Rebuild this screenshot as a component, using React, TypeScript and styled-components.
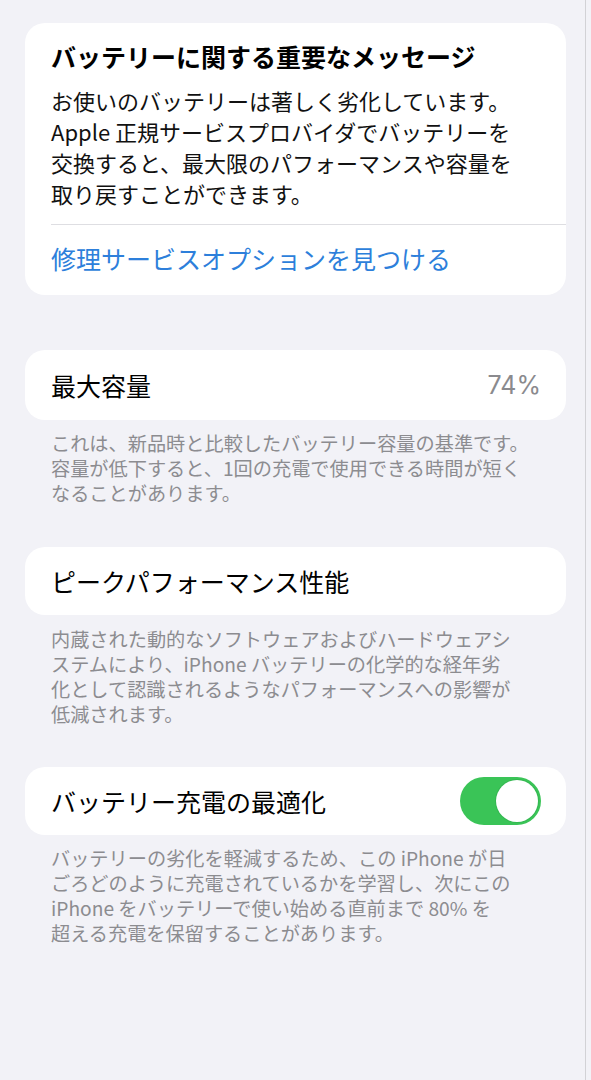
import React from "react";
import styled, { createGlobalStyle } from "styled-components";

const Global = createGlobalStyle`
  html, body {
    margin: 0;
    padding: 0;
    background: linear-gradient(to right, #f2f2f7 585px, #d2d2d6 585px, #d2d2d6 586px, #f2f2f7 586px);
    min-height: 1080px;
  }
  body {
    font-family: "Noto Sans CJK JP", "Noto Sans", sans-serif;
    -webkit-font-smoothing: antialiased;
  }
`;

const Page = styled.div`
  width: 591px;
  box-sizing: border-box;
  padding: 23px 25px 40px;
  display: flex;
  flex-direction: column;
`;

const Card = styled.div<{ $gapTop?: number }>`
  background: #ffffff;
  border-radius: 20px;
  margin-top: ${(p) => p.$gapTop ?? 0}px;
  overflow: hidden;
`;

const MessageBody = styled.div`
  padding: 17px 26px 15px;
`;

const Title = styled.div`
  font-size: 25px;
  line-height: 32px;
  font-weight: 700;
  color: #000;
  white-space: nowrap;
`;

const Paragraph = styled.div`
  margin-top: 13px;
  font-size: 22px;
  line-height: 31px;
  color: #111;
  white-space: nowrap;
`;

const Divider = styled.div`
  height: 1px;
  background: #dedee2;
  margin-left: 26px;
`;

const LinkRow = styled.div`
  height: 70px;
  display: flex;
  align-items: center;
  padding: 0 26px 4px;
  box-sizing: border-box;
  font-size: 25px;
  color: #2d7fdb;
  white-space: nowrap;
`;

const Row = styled.div<{ $h: number }>`
  height: ${(p) => p.$h}px;
  display: flex;
  align-items: center;
  justify-content: space-between;
  padding: 0 25px 0 26px;
`;

const RowLabel = styled.span`
  font-size: 25px;
  color: #000;
  white-space: nowrap;
`;

const RowValue = styled.span`
  font-size: 25px;
  color: #8a8a8e;
  font-family: "Inter", "Noto Sans", sans-serif;
`;

const Footer = styled.div<{ $top: number }>`
  padding: ${(p) => p.$top}px 20px 0 26px;
  font-size: 19.2px;
  line-height: 25px;
  color: #8c8c90;
  white-space: nowrap;
`;

const Switch = styled.div<{ $on: boolean }>`
  width: 81px;
  height: 48px;
  border-radius: 24px;
  background: ${(p) => (p.$on ? "#3ac457" : "#e9e9ea")};
  display: flex;
  align-items: center;
  justify-content: ${(p) => (p.$on ? "flex-end" : "flex-start")};
  padding: 0 3px;
  box-sizing: border-box;
`;

const Knob = styled.div`
  width: 42px;
  height: 42px;
  border-radius: 50%;
  background: #fff;
  box-shadow: 0 0 0 1px rgba(40, 160, 70, 0.35);
`;

export default function App() {
  return (
    <>
      <Global />
      <Page>
        <Card>
          <MessageBody>
            <Title>バッテリーに関する重要なメッセージ</Title>
            <Paragraph>
              お使いのバッテリーは著しく劣化しています。
              <br />
              Apple 正規サービスプロバイダでバッテリーを
              <br />
              交換すると、最大限のパフォーマンスや容量を
              <br />
              取り戻すことができます。
            </Paragraph>
          </MessageBody>
          <Divider />
          <LinkRow>修理サービスオプションを見つける</LinkRow>
        </Card>

        <Card $gapTop={55}>
          <Row $h={70}>
            <RowLabel>最大容量</RowLabel>
            <RowValue>74%</RowValue>
          </Row>
        </Card>
        <Footer $top={11}>
          これは、新品時と比較したバッテリー容量の基準です。
          <br />
          容量が低下すると、1回の充電で使用できる時間が短く
          <br />
          なることがあります。
        </Footer>

        <Card $gapTop={41}>
          <Row $h={68}>
            <RowLabel>ピークパフォーマンス性能</RowLabel>
          </Row>
        </Card>
        <Footer $top={12}>
          内蔵された動的なソフトウェアおよびハードウェアシ
          <br />
          ステムにより、iPhone バッテリーの化学的な経年劣
          <br />
          化として認識されるようなパフォーマンスへの影響が
          <br />
          低減されます。
        </Footer>

        <Card $gapTop={40}>
          <Row $h={68}>
            <RowLabel>バッテリー充電の最適化</RowLabel>
            <Switch $on>
              <Knob />
            </Switch>
          </Row>
        </Card>
        <Footer $top={11}>
          バッテリーの劣化を軽減するため、この iPhone が日
          <br />
          ごろどのように充電されているかを学習し、次にこの
          <br />
          iPhone をバッテリーで使い始める直前まで 80% を
          <br />
          超える充電を保留することがあります。
        </Footer>
      </Page>
    </>
  );
}
